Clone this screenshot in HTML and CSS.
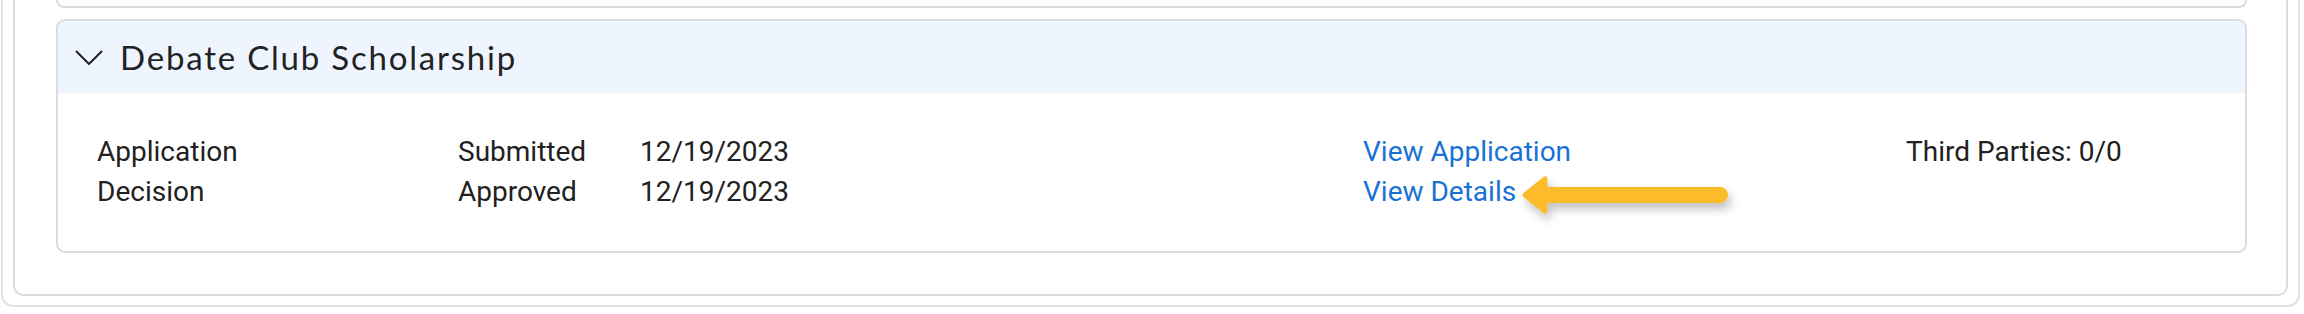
FILE: index.html
```html
<!DOCTYPE html>
<html lang="en">

<head>
    <meta charset="utf-8" />
    <title>Scholarships</title>
    <link rel="stylesheet" href="styles.css">
</head>

<body>
    <div class="outer">
        <div class="panel">
            <div class="card card-stub"></div>

            <div class="card">
                <div class="card-head">
                    <svg class="chevron" width="28" height="16" viewBox="0 0 28 16">
                        <path d="M1.5 1.5 L14 14 L26.5 1.5" fill="none" stroke="#222" stroke-width="2" stroke-linecap="round" stroke-linejoin="round" />
                    </svg>
                    <span class="card-title">Debate Club Scholarship</span>
                </div>
                <div class="card-body">
                    <div class="rows">
                        <div class="cell">Application</div>
                        <div class="cell">Submitted</div>
                        <div class="cell">12/19/2023</div>
                        <div class="cell"><a href="#" class="link">View Application</a></div>
                        <div class="cell">Third Parties: 0/0</div>

                        <div class="cell">Decision</div>
                        <div class="cell">Approved</div>
                        <div class="cell">12/19/2023</div>
                        <div class="cell">
                            <span class="pin">
                                <a href="#" class="link">View Details</a>
                                <!-- callout arrow drawn over the page -->
                                <svg class="callout" width="224" height="60" viewBox="0 0 224 60">
                                    <defs>
                                        <filter id="sh" x="-10%" y="-40%" width="130%" height="200%">
                                            <feDropShadow dx="3" dy="6" stdDeviation="5" flood-color="#000" flood-opacity="0.24" />
                                        </filter>
                                    </defs>
                                    <g filter="url(#sh)" fill="#fbbb2b" stroke="#fbbb2b" stroke-linejoin="round" stroke-linecap="round">
                                        <path d="M5 25 L25 9 L25 41 Z" stroke-width="5" />
                                        <line x1="24" y1="25" x2="200" y2="25" stroke-width="16" />
                                    </g>
                                </svg>
                            </span>
                        </div>
                        <div class="cell"></div>
                    </div>
                </div>
            </div>
        </div>
    </div>
</body>

</html>
```

FILE: styles.css
```css
html,
body {
    margin: 0;
    padding: 0;
    background: #fff;
}

body {
    width: 2304px;
    height: 314px;
    overflow: hidden;
    font-family: Roboto, "Liberation Sans", sans-serif;
    color: #212121;
}

.outer {
    margin: 0 4px 0 1px;
    padding: 0 10px 9px 10px;
    border: 2px solid #e2e2e2;
    border-top: none;
    border-radius: 0 0 12px 12px;
}

.panel {
    padding: 0 39px 41px 41px;
    border: 2px solid #dcdcdc;
    border-top: none;
    border-radius: 0 0 10px 10px;
}

.card {
    border: 2px solid #dcdcdc;
    border-radius: 9px;
    overflow: hidden;
    background: #fff;
}

.card-stub {
    height: 6px;
    border-top: none;
    border-radius: 0 0 9px 9px;
    margin-bottom: 11px;
}

.card-head {
    display: flex;
    align-items: center;
    height: 72px;
    padding-left: 17px;
    background: #eef5fe;
}

.chevron {
    display: block;
    margin-top: 1px;
}

.card-title {
    margin-left: 17px;
    font-family: Lato, "Noto Sans", sans-serif;
    font-size: 33px;
    letter-spacing: 1.8px;
    color: #222;
}

.card-body {
    padding: 39px 40px 39px 39px;
}

.rows {
    display: grid;
    grid-template-columns: 361px 182px 723px 543px 1fr;
    font-size: 28px;
    line-height: 40px;
}

.link {
    color: #1871d4;
    text-decoration: none;
}

.pin {
    position: relative;
    display: inline-block;
}

.callout {
    position: absolute;
    left: 100%;
    top: -2px;
    margin-left: 4px;
}
```
